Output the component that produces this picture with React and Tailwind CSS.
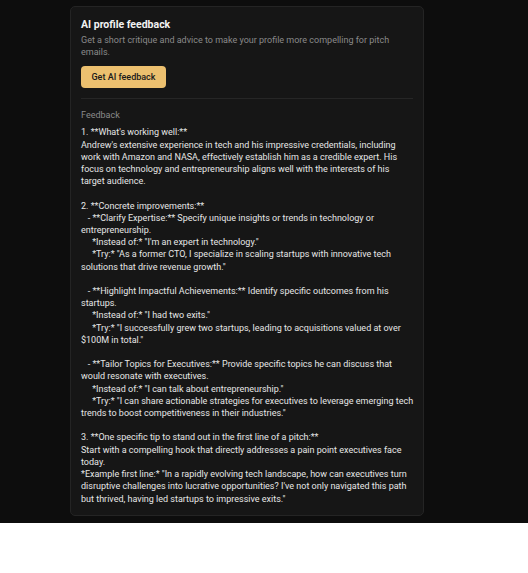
import React from "react";

const feedback = `1. **What's working well:**
Andrew's extensive experience in tech and his impressive credentials, including work with Amazon and NASA, effectively establish him as a credible expert. His focus on technology and entrepreneurship aligns well with the interests of his target audience.

2. **Concrete improvements:**
   - **Clarify Expertise:** Specify unique insights or trends in technology or entrepreneurship.
     *Instead of:* "I'm an expert in technology."
     *Try:* "As a former CTO, I specialize in scaling startups with innovative tech solutions that drive revenue growth."

   - **Highlight Impactful Achievements:** Identify specific outcomes from his startups.
     *Instead of:* "I had two exits."
     *Try:* "I successfully grew two startups, leading to acquisitions valued at over $100M in total."

   - **Tailor Topics for Executives:** Provide specific topics he can discuss that would resonate with executives.
     *Instead of:* "I can talk about entrepreneurship."
     *Try:* "I can share actionable strategies for executives to leverage emerging tech trends to boost competitiveness in their industries."

3. **One specific tip to stand out in the first line of a pitch:**
Start with a compelling hook that directly addresses a pain point executives face today.
*Example first line:* "In a rapidly evolving tech landscape, how can executives turn disruptive challenges into lucrative opportunities? I've not only navigated this path but thrived, having led startups to impressive exits."`;

export default function App() {
  return (
    <div className="bg-white min-h-[573px] font-['Roboto',sans-serif]">
      <div className="bg-[#0d0d0d] pt-[6px] pb-[7px] pl-[70px]">
        <div className="w-[354px] rounded-[5px] border border-[#242424] bg-[#161616] pl-[10px] pr-[8px] pt-[11px] pb-[10px]">
          <h2 className="text-[10.5px] font-bold leading-[14px] text-[#f2f2f2]">AI profile feedback</h2>
          <p className="mt-[3px] text-[9px] leading-[11.7px] text-[#8a8a8a]">
            Get a short critique and advice to make your profile more compelling for pitch emails.
          </p>
          <button className="mt-[8px] h-[22px] w-[85px] rounded-[4px] bg-[#ecc06f] text-[9px] font-medium text-[#1a1a1a]">
            Get AI feedback
          </button>
          <div className="mt-[10px] mr-[2px] border-t border-[#262626]" />
          <div className="mt-[10px] text-[9px] leading-[12px] text-[#8a8a8a]">Feedback</div>
          <div className="mt-[5px] whitespace-pre-wrap text-[9px] leading-[12.2px] text-[#e6e6e6]">
            {feedback}
          </div>
        </div>
      </div>
    </div>
  );
}
